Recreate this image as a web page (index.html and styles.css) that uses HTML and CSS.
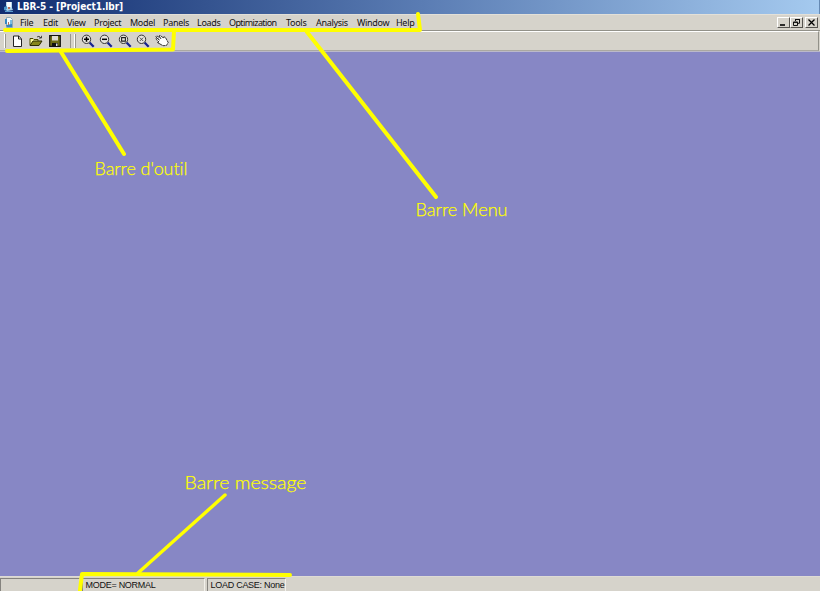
FILE: index.html
```html
<!DOCTYPE html>
<html lang="en">
<head>
<meta charset="utf-8">
<title>LBR-5 - [Project1.lbr]</title>
<link rel="stylesheet" href="styles.css">
</head>
<body>
<div class="window">
  <header class="titlebar">
    <svg class="app-icon" width="11" height="12" viewBox="0 0 11 12"><path d="M3 1h6v7H3z" fill="#b9d9ec"/><path d="M4 1h4v5H4z" fill="#f7fcff"/><path d="M1 6l3-1v5l-3-1z" fill="#4996cc"/><path d="M3 8l6-1 1 2-6 1z" fill="#a8d1e9"/><path d="M5 6h2v2H5z" fill="#b66f5c"/><path d="M2 10.5h8" stroke="#5a9bd0"/></svg>
    <h1>LBR-5 - [Project1.lbr]</h1>
  </header>
  <div class="menubar">
    <svg class="doc-icon" width="11" height="12" viewBox="0 0 11 12"><path d="M2.5.5h4l2 2v8h-6z" fill="#f5fbfd" stroke="#91a9b5"/><path d="M1 2h2v5H1z" fill="#3688c5"/><path d="M6 3h2v5H6z" fill="#78bce1"/><path d="M2 8l6-1v3H3z" fill="#3484bf"/><path d="M4 5h1v3H4z" fill="#b66f5c"/></svg>
    <nav class="menus"><span>File</span><span>Edit</span><span>View</span><span>Project</span><span>Model</span><span>Panels</span><span>Loads</span><span class="long">Optimization</span><span>Tools</span><span>Analysis</span><span>Window</span><span>Help</span></nav>
    <div class="controls">
      <button><svg width="11" height="9" viewBox="0 0 11 9"><path d="M2 7h5" stroke="#000" stroke-width="1.6"/></svg></button>
      <button><svg width="11" height="9" viewBox="0 0 11 9"><path d="M4.5 3V1.5h4v3.8H7M4 1.5h5M2.5 4h4v3.5h-4zM2 4.4h5" fill="none" stroke="#111"/></svg></button>
      <button class="close"><svg width="11" height="9" viewBox="0 0 11 9"><path d="M2.5 1.5l6 6m0-6l-6 6" stroke="#000" stroke-width="1.3"/></svg></button>
    </div>
  </div>
  <div class="toolbar">
    <div class="group files">
      <svg width="11" height="12" viewBox="0 0 11 12"><path d="M1.5 1h5.2l2.8 2.8v7.7h-8z" fill="#fff" stroke="#222"/><path d="M6.5 1v3h3" fill="none" stroke="#222"/></svg>
      <svg width="14" height="12" viewBox="0 0 14 12"><path d="M1 10V3.5h3l1 1h4V6" fill="#ffffa0" stroke="#4c4b00"/><path d="M1 10.5L4 6h9l-3 4.5z" fill="#85851b" stroke="#292900"/><path d="M8 2q2-2 4 1M12.5.8V3H10" fill="none" stroke="#222" stroke-width=".8"/></svg>
      <svg width="12" height="12" viewBox="0 0 12 12"><path d="M.7.7h10.6v10.6H.7z" fill="#6b6b13" stroke="#111" stroke-width="1.2"/><path d="M3 1h6v4.5H3z" fill="#dedbd2"/><path d="M3 8h6v3.5H3z" fill="#111"/><path d="M7 8.5h1.5V11H7z" fill="#ddd"/></svg>
    </div>
    <div class="group views">
      <svg width="14" height="14" viewBox="0 0 14 14"><path d="M8.5 8.5l4.2 4.2" stroke="#18238e" stroke-width="2.3"/><circle cx="5.5" cy="5.3" r="4.2" fill="#e6e4df" stroke="#333"/><path d="M3 5.3h5M5.5 2.8v5" stroke="#000" stroke-width="1.5"/></svg>
      <svg width="14" height="14" viewBox="0 0 14 14"><path d="M8.5 8.5l4.2 4.2" stroke="#18238e" stroke-width="2.3"/><circle cx="5.5" cy="5.3" r="4.2" fill="#e6e4df" stroke="#333"/><path d="M3 5.3h5" stroke="#000" stroke-width="1.5"/></svg>
      <svg width="14" height="14" viewBox="0 0 14 14"><path d="M8.5 8.5l4.2 4.2" stroke="#18238e" stroke-width="2.3"/><circle cx="5.5" cy="5.3" r="4.2" fill="#e6e4df" stroke="#333"/><path d="M3.6 3.6h3.8v3.5H3.6z" fill="none" stroke="#222" stroke-width="1.1"/></svg>
      <svg width="14" height="14" viewBox="0 0 14 14"><path d="M8.5 8.5l4.2 4.2" stroke="#18238e" stroke-width="2.3"/><circle cx="5.5" cy="5.3" r="4.2" fill="#e6e4df" stroke="#333"/><path d="M3.8 3.6l3.4 3.4m0-3.4L3.8 7" stroke="#444" stroke-width=".9"/></svg>
      <svg width="14" height="14" viewBox="0 0 14 14"><path d="M5 10L2.3 8.5 4 8 .8 5l.8-1L4.5 6 .8 2.8l.9-1L6 4.5 4 2l1-.7L8.5 4l.3-1.2 1.4.4L12 6.2l1.2 2.3-1.8 3-3.4.2z" fill="#fff" stroke="#222" stroke-width=".9" stroke-dasharray="3 .4"/></svg>
    </div>
  </div>
  <main class="workspace"></main>
  <footer class="statusbar"><span></span><span>MODE= NORMAL</span><span>LOAD CASE: None</span></footer>
  <svg class="annotations" width="820" height="591" viewBox="0 0 820 591">
    <g fill="none" stroke="#ff0" stroke-linecap="round" stroke-linejoin="round">
      <path d="M5 30H420L418 14" stroke-width="4"/>
      <path d="M174 31L173 49.5L7 51" stroke-width="4"/>
      <path d="M61 52L124 154M307 32L436 197" stroke-width="4"/>
      <path d="M225 495L138 573" stroke-width="3.4"/>
      <path d="M80 590L82 574L290 575" stroke-width="4"/>
    </g>
    <g class="labels">
      <text x="94.5" y="175" textLength="93" lengthAdjust="spacingAndGlyphs">Barre d'outil</text>
      <text x="415.5" y="216" textLength="92" lengthAdjust="spacingAndGlyphs">Barre Menu</text>
      <text x="184.5" y="489" textLength="122" lengthAdjust="spacingAndGlyphs">Barre message</text>
    </g>
  </svg>
</div>
</body>
</html>
```
FILE: styles.css
```css
* { box-sizing: border-box; }
body { margin: 0; overflow: hidden; }
.window {
  position: relative;
  display: flex;
  flex-direction: column;
  width: 820px;
  height: 591px;
  background: #d6d3cb;
  color: #111;
  font-family: "DejaVu Sans Condensed", "DejaVu Sans", sans-serif;
}
svg { display: block; flex: none; }
.titlebar {
  display: flex;
  align-items: center;
  gap: 3px;
  height: 14px;
  padding-left: 3px;
  border-right: 1px solid #6589b3;
  background: linear-gradient(90deg, #102c70, #34538f 25%, #5b7db4 52%, #a5caef);
}
h1 {
  margin: 0;
  color: #fff;
  font: bold 10px/14px "DejaVu Sans Condensed", sans-serif;
  letter-spacing: -.06px;
  white-space: nowrap;
}
.menubar {
  display: flex;
  align-items: center;
  height: 17px;
  padding: 0 2px 0 4px;
  border-top: 1px solid #e3e0d8;
  border-bottom: 1px solid #929189;
}
.menus {
  display: grid;
  grid-template-columns: 23px 24px 27px 36px 33px 34px 32px 57px 30px 41px 39px 20px;
  margin-left: 5px;
  font-family: "Noto Sans", sans-serif;
  font-size: 9px;
  line-height: 15px;
  letter-spacing: -.3px;
  white-space: nowrap;
}
.long { letter-spacing: -.6px; }
.controls { display: flex; margin-left: auto; }
button {
  width: 13px;
  height: 11px;
  padding: 0;
  border: 1px solid;
  border-color: #fff #55534f #55534f #fff;
  background: #d6d3cb;
}
.close { margin-left: 2px; }
.toolbar {
  display: flex;
  height: 20px;
  margin-right: 1px;
  border-top: 1px solid #fff;
  border-right: 1px solid #929189;
  border-bottom: 1px solid #aaa8a1;
}
.group {
  display: flex;
  align-items: center;
  margin: 2px 0;
  border-left: 1px solid #fff;
  box-shadow: 1px 0 #99978f inset;
}
.files { gap: 6px; width: 67px; margin-left: 4px; padding-left: 7px; border-right: 1px solid #99978f; }
.views { gap: 4.5px; margin-left: 3px; padding-left: 5.5px; }
.workspace { flex: 1; border-top: 1px solid #bbb9ca; background: #8787c5; }
.statusbar {
  display: flex;
  gap: 2px;
  height: 15px;
  padding-top: 1px;
  border-top: 1px solid #dedbd5;
}
.statusbar span {
  height: 16px;
  padding-left: 2.5px;
  border: 1px solid;
  border-color: #85837e #f2f0ea #f2f0ea #85837e;
  font: 9px/12px "Liberation Sans", sans-serif;
  white-space: nowrap;
}
.statusbar span:nth-child(1) { width: 80px; }
.statusbar span:nth-child(2) { width: 123px; letter-spacing: -.27px; }
.statusbar span:nth-child(3) { width: 79px; letter-spacing: -.27px; }
.annotations { position: absolute; inset: 0; pointer-events: none; }
.labels {
  fill: #ff0;
  stroke: #ff0;
  stroke-width: .25px;
  font: 300 18.5px Lato, sans-serif;
  font-variant-ligatures: none;
}
```
